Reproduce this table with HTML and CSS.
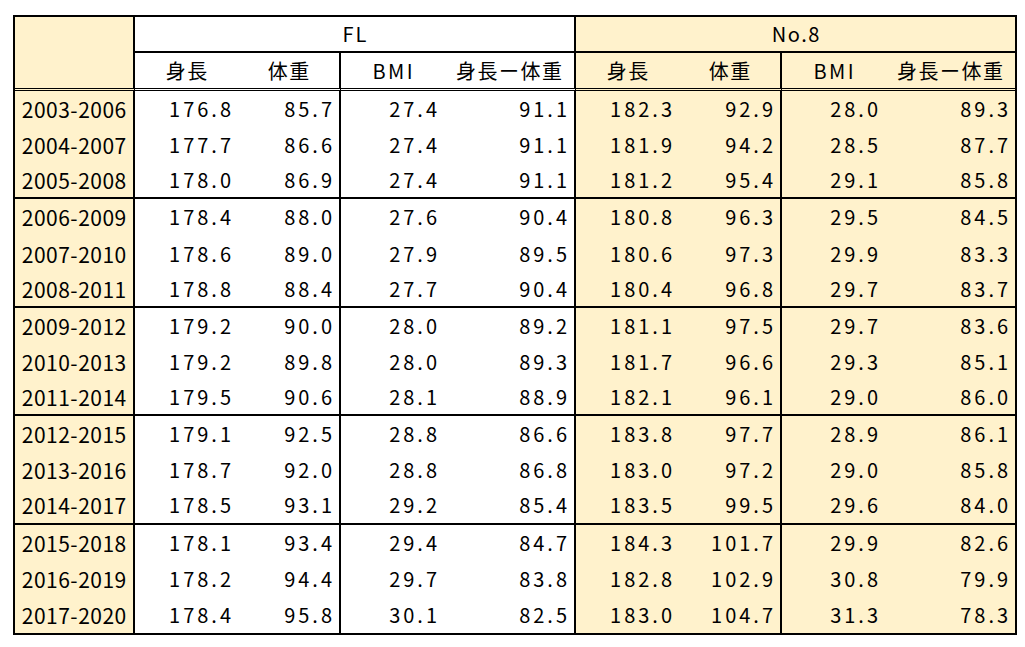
FILE: index.html
```html
<!DOCTYPE html>
<html lang="ja">
<head>
<meta charset="utf-8">
<title>FL / No.8 体格推移</title>
<link rel="stylesheet" href="styles.css">
</head>
<body>
<div class="sheet">
<table class="stats">
  <colgroup>
    <col class="c-label">
    <col class="c-num"><col class="c-num"><col class="c-num"><col class="c-diff1">
    <col class="c-num"><col class="c-num"><col class="c-num"><col class="c-diff2">
  </colgroup>
  <thead>
    <tr class="h1">
      <th class="corner cream" rowspan="2"></th>
      <th class="group fl" colspan="4">FL</th>
      <th class="group no8 cream" colspan="4">No.8</th>
    </tr>
    <tr class="h2">
      <th>身長</th><th class="br">体重</th><th class="en">BMI</th><th class="br">身長ー体重</th>
      <th class="cream">身長</th><th class="cream br">体重</th><th class="cream en">BMI</th><th class="cream">身長ー体重</th>
    </tr>
  </thead>
  <tbody>
    <tr><td>2003-2006</td><td>176.8</td><td>85.7</td><td>27.4</td><td>91.1</td><td>182.3</td><td>92.9</td><td>28.0</td><td>89.3</td></tr>
    <tr><td>2004-2007</td><td>177.7</td><td>86.6</td><td>27.4</td><td>91.1</td><td>181.9</td><td>94.2</td><td>28.5</td><td>87.7</td></tr>
    <tr><td>2005-2008</td><td>178.0</td><td>86.9</td><td>27.4</td><td>91.1</td><td>181.2</td><td>95.4</td><td>29.1</td><td>85.8</td></tr>
  </tbody>
  <tbody>
    <tr><td>2006-2009</td><td>178.4</td><td>88.0</td><td>27.6</td><td>90.4</td><td>180.8</td><td>96.3</td><td>29.5</td><td>84.5</td></tr>
    <tr><td>2007-2010</td><td>178.6</td><td>89.0</td><td>27.9</td><td>89.5</td><td>180.6</td><td>97.3</td><td>29.9</td><td>83.3</td></tr>
    <tr><td>2008-2011</td><td>178.8</td><td>88.4</td><td>27.7</td><td>90.4</td><td>180.4</td><td>96.8</td><td>29.7</td><td>83.7</td></tr>
  </tbody>
  <tbody>
    <tr><td>2009-2012</td><td>179.2</td><td>90.0</td><td>28.0</td><td>89.2</td><td>181.1</td><td>97.5</td><td>29.7</td><td>83.6</td></tr>
    <tr><td>2010-2013</td><td>179.2</td><td>89.8</td><td>28.0</td><td>89.3</td><td>181.7</td><td>96.6</td><td>29.3</td><td>85.1</td></tr>
    <tr><td>2011-2014</td><td>179.5</td><td>90.6</td><td>28.1</td><td>88.9</td><td>182.1</td><td>96.1</td><td>29.0</td><td>86.0</td></tr>
  </tbody>
  <tbody>
    <tr><td>2012-2015</td><td>179.1</td><td>92.5</td><td>28.8</td><td>86.6</td><td>183.8</td><td>97.7</td><td>28.9</td><td>86.1</td></tr>
    <tr><td>2013-2016</td><td>178.7</td><td>92.0</td><td>28.8</td><td>86.8</td><td>183.0</td><td>97.2</td><td>29.0</td><td>85.8</td></tr>
    <tr><td>2014-2017</td><td>178.5</td><td>93.1</td><td>29.2</td><td>85.4</td><td>183.5</td><td>99.5</td><td>29.6</td><td>84.0</td></tr>
  </tbody>
  <tbody>
    <tr><td>2015-2018</td><td>178.1</td><td>93.4</td><td>29.4</td><td>84.7</td><td>184.3</td><td>101.7</td><td>29.9</td><td>82.6</td></tr>
    <tr><td>2016-2019</td><td>178.2</td><td>94.4</td><td>29.7</td><td>83.8</td><td>182.8</td><td>102.9</td><td>30.8</td><td>79.9</td></tr>
    <tr><td>2017-2020</td><td>178.4</td><td>95.8</td><td>30.1</td><td>82.5</td><td>183.0</td><td>104.7</td><td>31.3</td><td>78.3</td></tr>
  </tbody>
</table>
</div>
</body>
</html>
```

FILE: styles.css
```css
html, body {
  margin: 0;
  padding: 0;
  background: #ffffff;
}

.sheet {
  padding: 15px 0 0 13px;
}

.stats {
  border-collapse: separate;
  border-spacing: 0;
  border: 2px solid #000;
  width: 1004px;
  table-layout: fixed;
  font-family: "Noto Sans CJK JP", "Noto Sans", sans-serif;
  color: #000;
}

.c-label { width: 120px; }
.c-num { width: 103px; }
.c-diff1 { width: 132px; }
.c-diff2 { width: 130px; }

.stats th,
.stats td {
  box-sizing: border-box;
  padding: 0;
  font-weight: normal;
  font-size: 20px;
  line-height: 24px;
  vertical-align: middle;
  white-space: nowrap;
}

.cream {
  background: #fff2cc;
}

.br {
  border-right: 2px solid #000;
}

/* header */
.h1 { height: 36px; }
.h2 { height: 38px; }

.stats th {
  text-align: center;
  letter-spacing: 1.5px;
  padding-left: 1.5px;
}

.stats th.en {
  letter-spacing: 2.5px;
  padding-left: 2.5px;
}

.stats th.group {
  border-bottom: 2px solid #000;
}

.stats th.fl {
  border-right: 2px solid #000;
  letter-spacing: 2px;
  padding-left: 2px;
}

.stats th.corner {
  border-right: 2px solid #000;
  border-bottom: 3px double #000;
}

.h2 th {
  border-bottom: 3px double #000;
}

/* body */
.stats tbody tr {
  height: 36.13px;
}

.stats td {
  text-align: right;
  letter-spacing: 3px;
  padding-right: 4px;
}

.stats td:nth-child(1) {
  background: #fff2cc;
  border-right: 2px solid #000;
  text-align: center;
  font-size: 21px;
  letter-spacing: 0.5px;
  padding: 0 0 0 0.5px;
}

.stats td:nth-child(3),
.stats td:nth-child(5),
.stats td:nth-child(7) {
  border-right: 2px solid #000;
}

.stats td:nth-child(n+6) {
  background: #fff2cc;
}

.stats tbody:not(:last-child) tr:last-child td {
  border-bottom: 2px solid #000;
}
```
